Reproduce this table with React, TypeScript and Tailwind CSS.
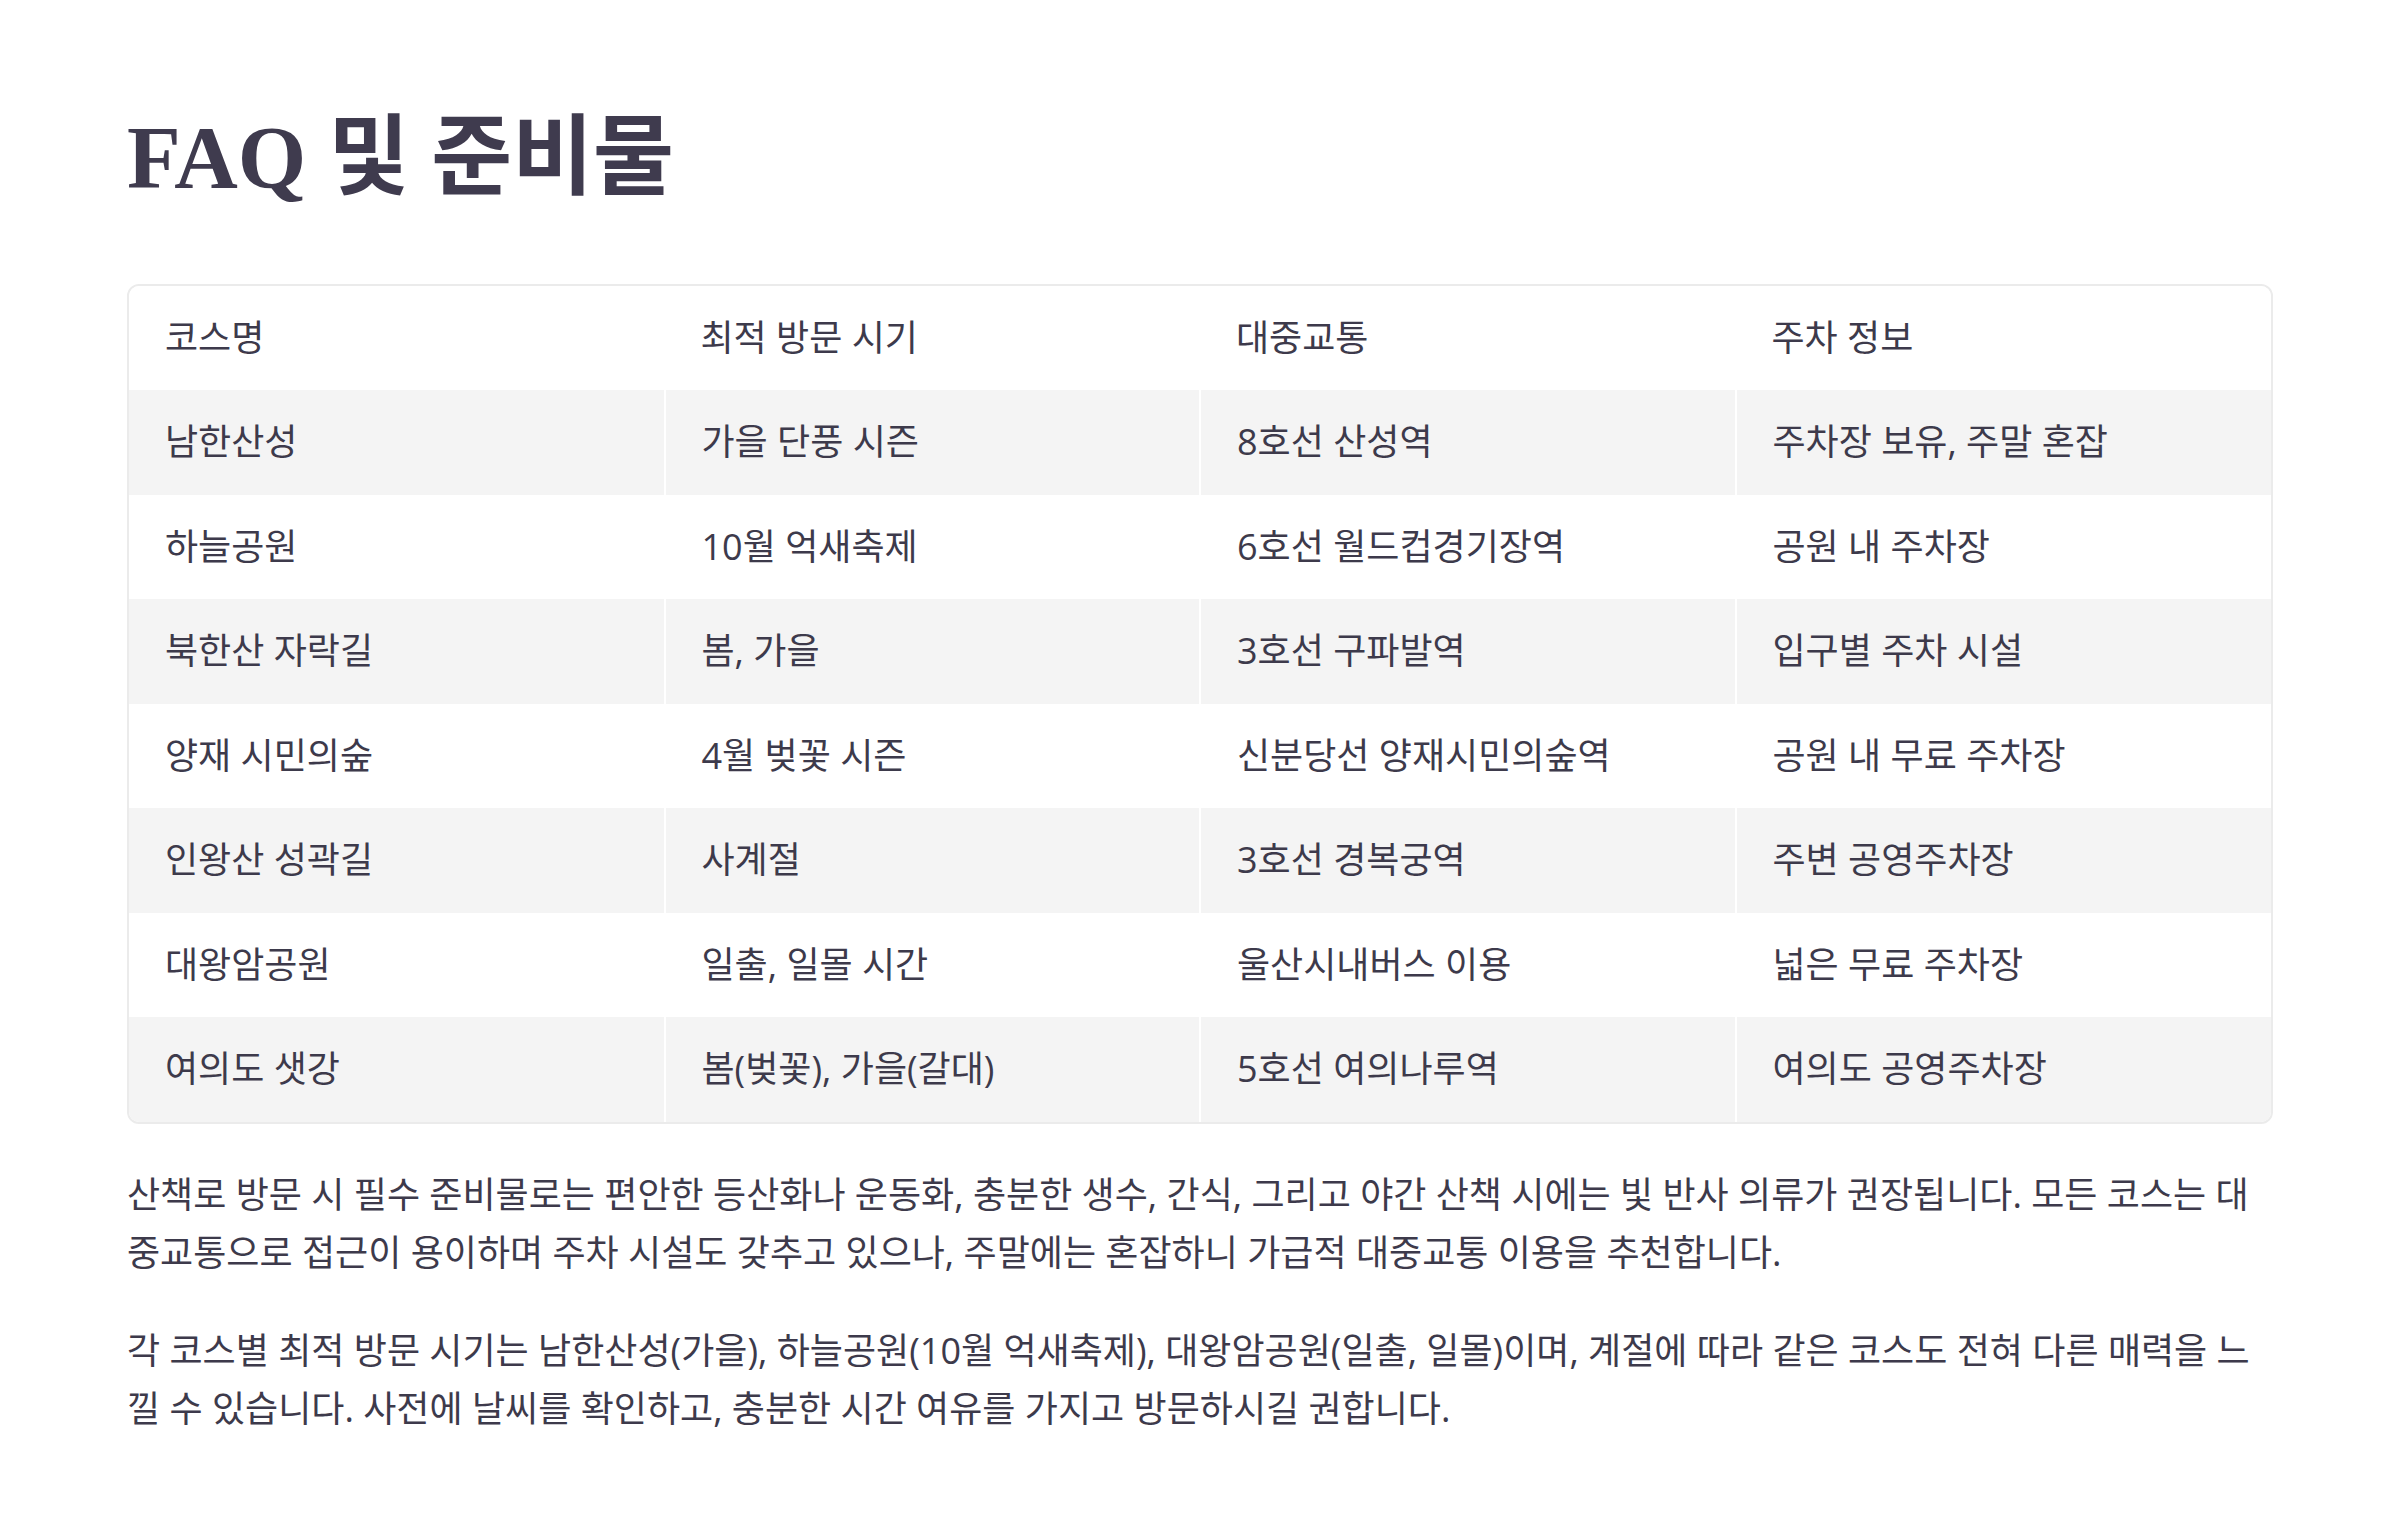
const rows = [
  ['남한산성', '가을 단풍 시즌', '8호선 산성역', '주차장 보유, 주말 혼잡'],
  ['하늘공원', '10월 억새축제', '6호선 월드컵경기장역', '공원 내 주차장'],
  ['북한산 자락길', '봄, 가을', '3호선 구파발역', '입구별 주차 시설'],
  ['양재 시민의숲', '4월 벚꽃 시즌', '신분당선 양재시민의숲역', '공원 내 무료 주차장'],
  ['인왕산 성곽길', '사계절', '3호선 경복궁역', '주변 공영주차장'],
  ['대왕암공원', '일출, 일몰 시간', '울산시내버스 이용', '넓은 무료 주차장'],
  ['여의도 샛강', '봄(벚꽃), 가을(갈대)', '5호선 여의나루역', '여의도 공영주차장'],
]

const headers = ['코스명', '최적 방문 시기', '대중교통', '주차 정보']

export default function App() {
  return (
    <div className="min-h-screen w-full bg-white text-[#3d3a4b] font-['Open_Sans','Noto_Sans_CJK_KR',sans-serif]">
      <div className="px-[127px] pt-[105px] pb-20">
        <h1 className="text-[88px] leading-[1.2] font-bold text-[#3f3b4e] font-['Liberation_Serif','Noto_Sans_CJK_KR',serif]">
          FAQ 및 준비물
        </h1>

        {/* Table */}
        <div className="mt-[73px] rounded-[12px] border-2 border-[#ebebeb] overflow-hidden">
          <table className="w-full table-fixed border-collapse text-[36px] leading-[48.5px]">
            <thead>
              <tr className="bg-white">
                {headers.map((h) => (
                  <th key={h} className="px-[36px] py-[28px] text-left font-normal">
                    {h}
                  </th>
                ))}
              </tr>
            </thead>
            <tbody>
              {rows.map((row, i) => (
                <tr key={row[0]} className={i % 2 === 0 ? 'bg-[#f4f4f4]' : 'bg-white'}>
                  {row.map((cell, j) => (
                    <td
                      key={j}
                      className={`px-[36px] py-[28px] ${j < 3 ? 'border-r-2 border-white' : ''}`}
                    >
                      {cell}
                    </td>
                  ))}
                </tr>
              ))}
            </tbody>
          </table>
        </div>

        {/* Notes */}
        <div className="mt-[42px] text-[36px] leading-[58px]">
          <p>
            산책로 방문 시 필수 준비물로는 편안한 등산화나 운동화, 충분한 생수, 간식, 그리고 야간 산책 시에는 빛 반사 의류가 권장됩니다. 모든 코스는 대중교통으로 접근이 용이하며 주차 시설도 갖추고 있으나, 주말에는 혼잡하니 가급적 대중교통 이용을 추천합니다.
          </p>
          <p className="mt-[40px]">
            각 코스별 최적 방문 시기는 남한산성(가을), 하늘공원(10월 억새축제), 대왕암공원(일출, 일몰)이며, 계절에 따라 같은 코스도 전혀 다른 매력을 느낄 수 있습니다. 사전에 날씨를 확인하고, 충분한 시간 여유를 가지고 방문하시길 권합니다.
          </p>
        </div>
      </div>
    </div>
  )
}
